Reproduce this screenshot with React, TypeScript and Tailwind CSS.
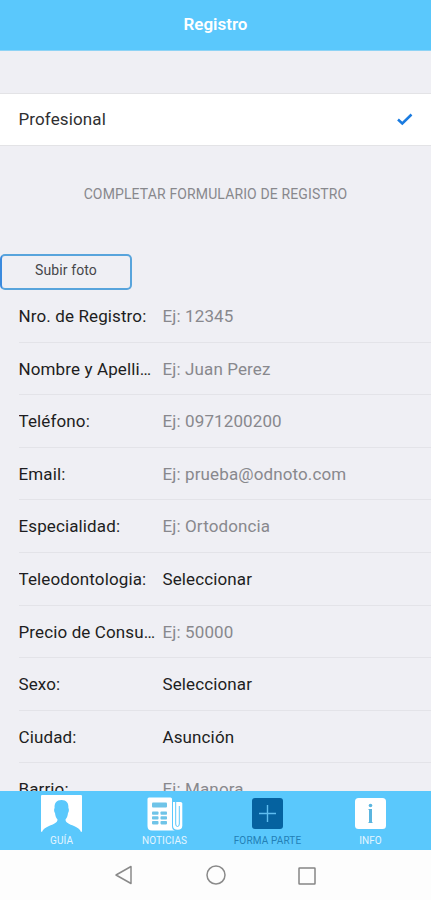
import type { ReactNode } from "react";

interface Field {
    label: string;
    value?: string;
    placeholder?: string;
}

const fields: Field[] = [
    { label: "Nro. de Registro:", placeholder: "Ej: 12345" },
    { label: "Nombre y Apellido:", placeholder: "Ej: Juan Perez" },
    { label: "Teléfono:", placeholder: "Ej: 0971200200" },
    { label: "Email:", placeholder: "Ej: prueba@odnoto.com" },
    { label: "Especialidad:", placeholder: "Ej: Ortodoncia" },
    { label: "Teleodontologia:", value: "Seleccionar" },
    { label: "Precio de Consulta:", placeholder: "Ej: 50000" },
    { label: "Sexo:", value: "Seleccionar" },
    { label: "Ciudad:", value: "Asunción" },
    { label: "Barrio:", placeholder: "Ej: Manora" },
];

function FieldRow({ label, value, placeholder }: Field) {
    return (
        <div className="ml-[18.5px] pt-[2px] h-[52.6px] shrink-0 flex flex-row items-center border-b border-[#e3e3e8] text-[17px] tracking-[0.12px]">
            <p className="w-[138px] mr-[6px] shrink-0 truncate text-[#1d1d21]">
                {label}
            </p>
            {value ? (
                <p className="text-[#1d1d21]">{value}</p>
            ) : (
                <p className="text-[#88888d]">{placeholder}</p>
            )}
        </div>
    );
}

function PersonIcon() {
    return (
        <svg width="41" height="37" viewBox="0 0 41 37">
            <rect width="41" height="37" rx="1" fill="#fff" />
            <path
                d="M1 37C2 34 4.500 32.500 8 31C12.500 29 16.500 28 16.500 24.500C14.800 22.500 14.300 20.500 14 18C13 17 12.800 14 13.600 13C13.200 8 15.500 5 20.500 5C25.500 5 27.800 8 27.400 13C28.200 14 28 17 27 18C26.700 20.500 26.200 22.500 24.500 24.500C24.500 28 28.500 29 33 31C36.500 32.500 39 34 40 37Z"
                fill="#5ac8fc"
            />
        </svg>
    );
}

function NewsIcon() {
    return (
        <svg width="36" height="34" viewBox="0 0 36 34">
            <path
                d="M2 0.500H23.500Q25 0.500 25 2V29Q25 33 28 33.500H5Q0.500 33.500 0.500 29V2Q0.500 0.500 2 0.500Z"
                fill="#fff"
            />
            <path
                d="M26 5H33.500Q35.300 5 35.300 6.500V28.500Q35.300 32.800 30.700 32.800Q26 32.800 26 28.500Z"
                fill="#fff"
            />
            <g fill="#6fc4e8">
                <rect x="5" y="5.500" width="15" height="5" rx="1" />
                <rect x="5" y="14.500" width="6.500" height="3.300" rx="0.800" />
                <rect x="5" y="19.300" width="6.500" height="3.300" rx="0.800" />
                <rect x="5" y="24.100" width="6.500" height="3.300" rx="0.800" />
                <rect x="13.500" y="14.500" width="6.500" height="3.300" rx="0.800" />
                <rect x="13.500" y="19.300" width="6.500" height="3.300" rx="0.800" />
                <rect x="13.500" y="24.100" width="6.500" height="3.300" rx="0.800" />
            </g>
            <path
                d="M28.700 5V27Q28.700 29.500 30.500 29.500Q32.300 29.500 32.300 27V9"
                fill="none"
                stroke="#5ac8fc"
                strokeWidth="1"
            />
        </svg>
    );
}

function PlusIcon() {
    return (
        <svg width="31" height="31" viewBox="0 0 31 31">
            <rect width="31" height="31" rx="3" fill="#0562a0" />
            <path d="M15.500 7V24M7 15.500H24" stroke="#5fbdf0" strokeWidth="1.400" />
        </svg>
    );
}

function InfoIcon() {
    return (
        <svg width="31" height="31" viewBox="0 0 31 31">
            <rect width="31" height="31" rx="3.500" fill="#fff" />
            <circle cx="15.500" cy="7.500" r="1.800" fill="#5bb5df" />
            <path d="M13.500 11H17V24H17.500V25H13.500V24H14V12H13.500Z" fill="#5bb5df" />
        </svg>
    );
}

function Tab({ icon, label, active }: { icon: ReactNode; label: string; active?: boolean }) {
    return (
        <button className="w-[103px] h-full flex flex-col items-center justify-end pb-[3px]">
            <span className="h-[40px] pb-[1px] flex items-center">{icon}</span>
            <span
                className={
                    active
                        ? "text-[10px] leading-[13px] tracking-[0.15px] text-[#2380b6]"
                        : "text-[10px] leading-[13px] tracking-[0.1px] text-[#e4f5ff]"
                }
            >
                {label}
            </span>
        </button>
    );
}

export default function App() {
    return (
        <div className="w-[431px] h-[900px] overflow-hidden flex flex-col bg-[#efeff4] font-['Roboto',sans-serif]">
            <header className="h-[51px] shrink-0 flex items-center justify-center bg-[#5ac8fc] border-b border-[#8ed3f5]">
                <h1 className="text-[17px] font-semibold text-white">Registro</h1>
            </header>
            <main className="flex-1 min-h-0 overflow-hidden flex flex-col">
                <div className="mt-[42px] h-[53px] shrink-0 pl-[18.5px] pr-[17px] flex flex-row items-center justify-between bg-white border-y border-[#e3e3e6]">
                    <p className="pt-[1px] text-[17px] tracking-[0.12px] text-[#2f2f31]">Profesional</p>
                    <svg width="18" height="14" viewBox="0 0 18 14">
                        <path d="M2 6.500L6.300 10.500L15.500 1.500" fill="none" stroke="#1a7be0" strokeWidth="2.500" />
                    </svg>
                </div>
                <h2 className="mt-[38px] h-[20px] shrink-0 leading-[20px] text-center text-[14px] tracking-[0.13px] text-[#88888d]">
                    COMPLETAR FORMULARIO DE REGISTRO
                </h2>
                <button className="mt-[50px] w-[132px] h-[36px] shrink-0 pb-[4px] flex items-center justify-center rounded-[5px] border-2 border-[#58a4dc] border-l-[#3a8ade] text-[14px] tracking-[0.1px] text-[#46464a]">
                    Subir foto
                </button>
                {fields.map((field) => (
                    <FieldRow key={field.label} {...field} />
                ))}
            </main>
            <nav className="h-[59px] shrink-0 pl-[10px] flex flex-row bg-[#5ac8fc]">
                <Tab icon={<PersonIcon />} label="GUÍA" />
                <Tab icon={<NewsIcon />} label="NOTICIAS" />
                <Tab icon={<PlusIcon />} label="FORMA PARTE" active />
                <Tab icon={<InfoIcon />} label="INFO" />
            </nav>
            <footer className="h-[50px] shrink-0 pl-[114px] flex flex-row items-center gap-[73px] bg-[#fdfdfd]">
                <svg width="19" height="20" viewBox="0 0 19 20" fill="none" stroke="#8a8a8a" strokeWidth="1.500">
                    <path d="M17 1.500V18.500L2 10Z" strokeLinejoin="round" />
                </svg>
                <svg width="20" height="20" viewBox="0 0 20 20" fill="none" stroke="#8a8a8a" strokeWidth="1.500">
                    <circle cx="10" cy="10" r="9" />
                </svg>
                <svg className="-ml-[1px] mt-[1px]" width="18" height="18" viewBox="0 0 18 18" fill="none" stroke="#858585" strokeWidth="1.500">
                    <rect x="1" y="1" width="16" height="16" rx="0.500" />
                </svg>
            </footer>
        </div>
    );
}
